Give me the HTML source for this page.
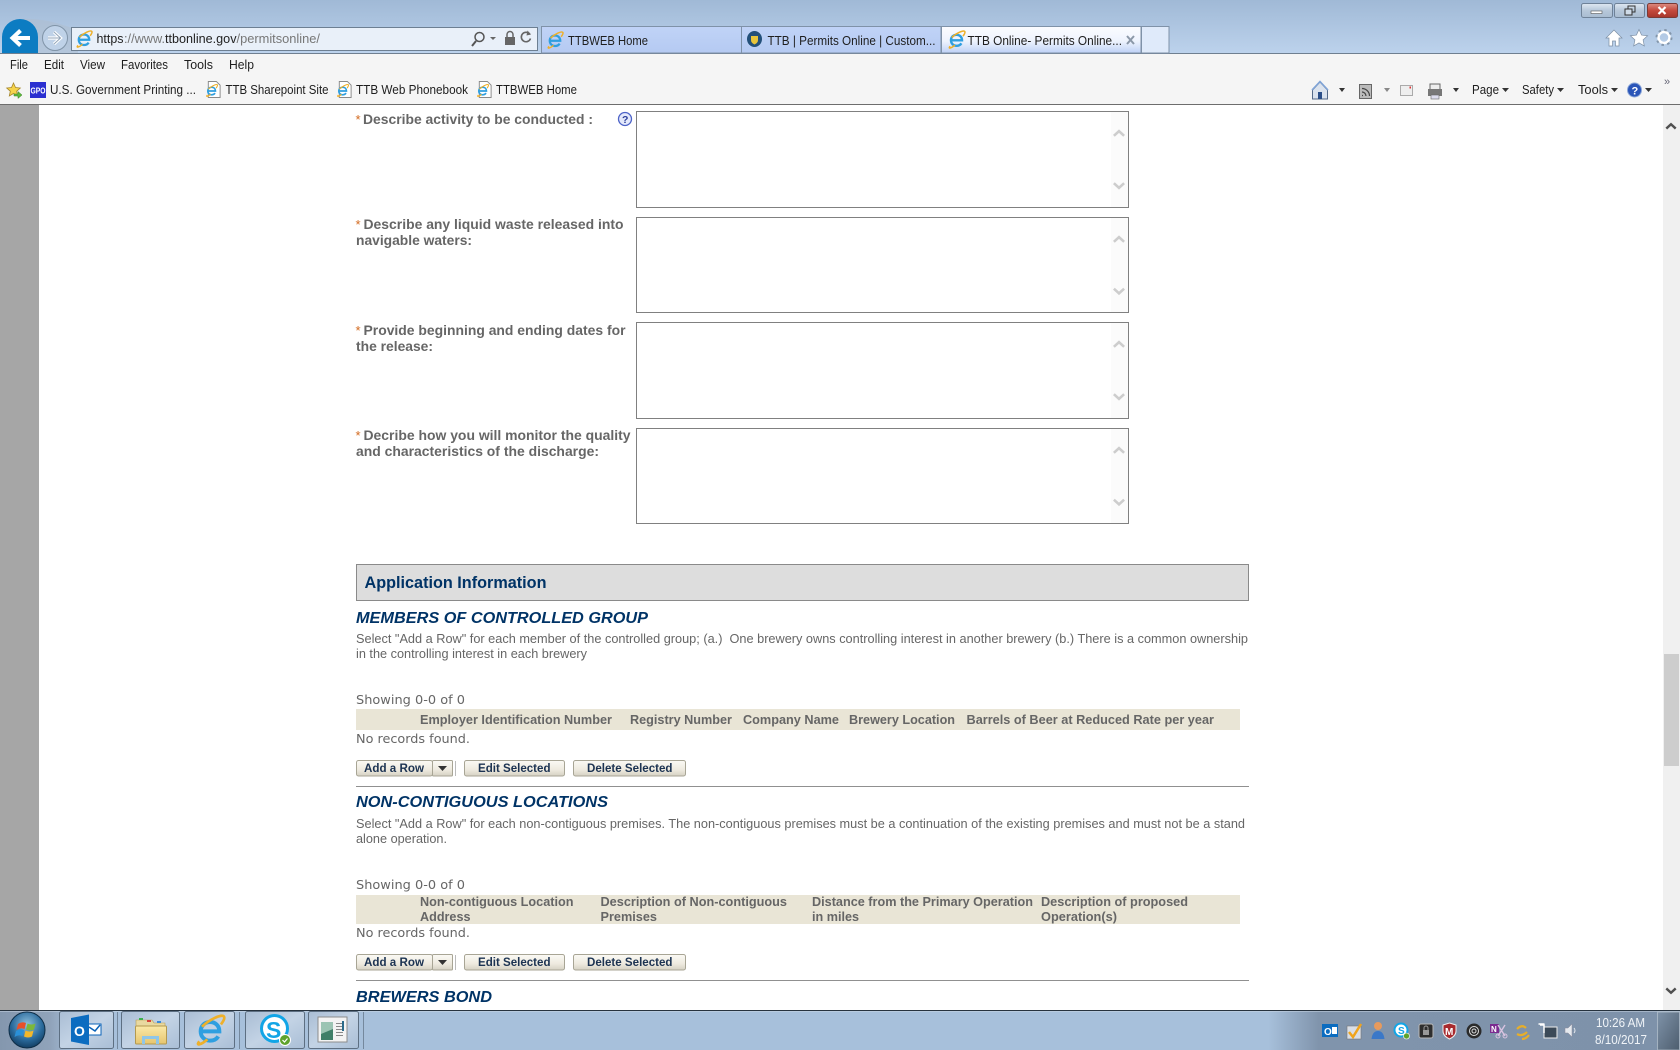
<!DOCTYPE html>
<html lang="en"><head><meta charset="utf-8"><title>TTB Online- Permits Online</title>
<style>
html,body{margin:0;padding:0;background:#fff;overflow:hidden;width:1680px;height:1050px}
svg{display:block}
text{white-space:pre}
.ui{font-family:"Liberation Sans",sans-serif;font-size:12.5px;fill:#1e1e1e}
.lab{font-family:"Liberation Sans",sans-serif;font-weight:bold;font-size:14px;fill:#666}
.st{font-family:"Liberation Sans",sans-serif;font-size:13px;fill:#d2691e}
.h{font-family:"Liberation Sans",sans-serif;font-weight:bold;font-style:italic;font-size:16px;fill:#003366}
.d{font-family:"Liberation Sans",sans-serif;font-size:12.5px;fill:#666}
.v{font-family:"DejaVu Sans",sans-serif;font-size:12.5px;fill:#666}
.th{font-family:"Liberation Sans",sans-serif;font-weight:bold;font-size:13.3px;fill:#666}
.b{font-family:"Liberation Sans",sans-serif;font-weight:bold;font-size:12px;fill:#1c3352}
.c{font-family:"Liberation Sans",sans-serif;font-size:12.5px;fill:#f0f4f8}
</style></head><body>
<svg xmlns="http://www.w3.org/2000/svg" width="1680" height="1050" viewBox="0 0 1680 1050">
<defs>
<linearGradient id="top" x1="0" y1="0" x2="0" y2="1"><stop offset="0" stop-color="#a0b9d6"/><stop offset="1" stop-color="#bcd2ec"/></linearGradient>
<linearGradient id="tab" x1="0" y1="0" x2="0" y2="1"><stop offset="0" stop-color="#c0d3f7"/><stop offset="1" stop-color="#b5caf2"/></linearGradient>
<linearGradient id="atab" x1="0" y1="0" x2="0" y2="1"><stop offset="0" stop-color="#fbfcff"/><stop offset=".55" stop-color="#eef3fd"/><stop offset="1" stop-color="#bed1f6"/></linearGradient>
<linearGradient id="btn" x1="0" y1="0" x2="0" y2="1"><stop offset="0" stop-color="#fbfaf5"/><stop offset=".6" stop-color="#eeeadf"/><stop offset="1" stop-color="#d5d1c3"/></linearGradient>
<linearGradient id="tb" x1="0" y1="0" x2="1" y2="0"><stop offset="0" stop-color="#8497ae"/><stop offset=".03" stop-color="#90a3ba"/><stop offset=".045" stop-color="#a7c0db"/><stop offset=".755" stop-color="#a7c0db"/><stop offset=".785" stop-color="#8094ac"/><stop offset="1" stop-color="#7e92aa"/></linearGradient>
<linearGradient id="tbb" x1="0" y1="0" x2="1" y2="1"><stop offset="0" stop-color="#a9bdd4"/><stop offset=".5" stop-color="#c3d3e5"/><stop offset="1" stop-color="#a9bed6"/></linearGradient>
<linearGradient id="win" x1="0" y1="0" x2="0" y2="1"><stop offset="0" stop-color="#dfe8f2"/><stop offset=".5" stop-color="#b7c8da"/><stop offset="1" stop-color="#a9bcd1"/></linearGradient>
<linearGradient id="cls" x1="0" y1="0" x2="0" y2="1"><stop offset="0" stop-color="#dc8d82"/><stop offset=".5" stop-color="#c4493c"/><stop offset="1" stop-color="#a6352b"/></linearGradient>
<radialGradient id="orb" cx=".5" cy=".35" r=".7"><stop offset="0" stop-color="#8ec0dd"/><stop offset=".6" stop-color="#2a6a9c"/><stop offset="1" stop-color="#0e3557"/></radialGradient>
<linearGradient id="desk" x1="0" y1="0" x2="1" y2="1"><stop offset="0" stop-color="#7f93a9"/><stop offset="1" stop-color="#4d5d6e"/></linearGradient>
<linearGradient id="fold" x1="0" y1="0" x2="0" y2="1"><stop offset="0" stop-color="#fbe9a8"/><stop offset="1" stop-color="#e6c56e"/></linearGradient>
<symbol id="ie" viewBox="0 0 24 24"><path d="M5.5 13H19c0-4.200-3-7-7-7s-7 3-7 7 3 7 7 7c2.700 0 4.800-1 6.200-3.200" fill="none" stroke="#2f9fe0" stroke-width="3"/><path d="M4 20.500C1 24 5 23.500 10 19M6 9.500C11 4.500 21 -.5 22.500 2c.8 1.500-.8 3.800-2.300 5.800" fill="none" stroke="#eeb02a" stroke-width="2"/></symbol>
<symbol id="doc" viewBox="0 0 18 18"><path d="M3.500 .5H12l4 4V17.500H3.500z" fill="#fff" stroke="#8a8a8a"/><use href="#ie" x="0" y="3" width="14" height="14"/></symbol>
<symbol id="chv" viewBox="0 0 14 8"><path d="M1.500 7L7 2l5.500 5" fill="none" stroke="currentColor" stroke-width="2.800"/></symbol>
</defs>

<!-- browser chrome -->
<rect width="1680" height="53" fill="url(#top)"/>
<rect y="53" width="1680" height="1" fill="#6f7f90"/>
<rect y="54" width="1680" height="50" fill="#f5f5f5"/>
<rect y="104" width="1680" height="1" fill="#6d6d6d"/>

<!-- window buttons -->
<rect x="1581.500" y="3.500" width="31" height="14" rx="2" fill="url(#win)" stroke="#6f8298"/>
<rect x="1591" y="11" width="11" height="2.500" fill="#fff" stroke="#555" stroke-width=".6"/>
<rect x="1614.500" y="3.500" width="30" height="14" rx="2" fill="url(#win)" stroke="#6f8298"/>
<rect x="1628" y="6" width="7" height="6" fill="none" stroke="#333"/><rect x="1625" y="9" width="7" height="6" fill="#cfdbe8" stroke="#333"/>
<rect x="1647.500" y="3.500" width="30" height="14" rx="2" fill="url(#cls)" stroke="#7a3a35"/>
<path d="M1658.500 7l7 7M1665.500 7l-7 7" stroke="#fff" stroke-width="2.200"/>

<!-- back/forward -->
<path d="M20 19C45 18 60 24 78 30V53H20z" fill="#aebdcd" opacity=".55"/>
<circle cx="55" cy="38" r="12.500" fill="#bfd2e8" stroke="#8094a8"/>
<path d="M48 38h12M54 32l6.500 6-6.500 6" fill="none" stroke="#fff" stroke-width="3.200"/>
<path d="M48 38h12M54 32l6.500 6-6.500 6" fill="none" stroke="#93a5b8" stroke-width="1"/>
<path d="M2 53V37a18 18 0 0 1 36 0v16z" fill="#0c7cc2"/>
<path d="M30 38H13M20.500 30.500L12.500 38l8 7.500" fill="none" stroke="#fff" stroke-width="4"/>

<!-- address bar -->
<rect x="71.500" y="27.500" width="466" height="23" fill="#e9f0f9" stroke="#6d7f92"/>
<use href="#ie" x="75" y="30" width="18" height="18"/>
<text class="ui" x="96.500" y="43" textLength="27" lengthAdjust="spacingAndGlyphs" style="fill:#222">https</text>
<text class="ui" x="124" y="43" textLength="41" lengthAdjust="spacingAndGlyphs" style="fill:#777">://www.</text>
<text class="ui" x="165" y="43" textLength="71.500" lengthAdjust="spacingAndGlyphs" style="fill:#222">ttbonline.gov</text>
<text class="ui" x="236.500" y="43" textLength="83.500" lengthAdjust="spacingAndGlyphs" style="fill:#777">/permitsonline/</text>
<circle cx="479.500" cy="37" r="4.500" fill="none" stroke="#555" stroke-width="1.500"/><path d="M476 41l-4 5" stroke="#555" stroke-width="2"/>
<path d="M490 37h6l-3 3z" fill="#666"/>
<rect x="505" y="37" width="10" height="8" fill="#666"/><path d="M507 37v-2.500a3 3 0 0 1 6 0V37" fill="none" stroke="#666" stroke-width="1.500"/>
<path d="M530 34.500a4.700 4.700 0 1 0 .5 4" fill="none" stroke="#666" stroke-width="1.600"/><path d="M527.500 30.500l3.500 4-4.500 1z" fill="#666"/>

<!-- tabs -->
<rect x="541.500" y="26.500" width="200" height="26.500" fill="url(#tab)" stroke="#7f92a8"/>
<rect x="741.500" y="26.500" width="199.500" height="26.500" fill="url(#tab)" stroke="#7f92a8"/>
<rect x="941.500" y="26.500" width="199.500" height="26.500" fill="url(#atab)" stroke="#7f92a8"/>
<rect x="1141.500" y="26.500" width="27.500" height="26.500" fill="#dfeafa" stroke="#7f92a8"/>
<use href="#ie" x="546" y="31" width="18" height="18"/>
<text class="ui" x="568" y="45" textLength="80" lengthAdjust="spacingAndGlyphs">TTBWEB Home</text>
<ellipse cx="754.500" cy="39" rx="7.500" ry="8" fill="#23507a"/><path d="M751 36h7v4q0 3-3.500 4.500Q751 43 751 40z" fill="#e8c53a"/>
<text class="ui" x="767.500" y="45" textLength="168" lengthAdjust="spacingAndGlyphs">TTB | Permits Online | Custom...</text>
<use href="#ie" x="947" y="30" width="19" height="19"/>
<text class="ui" x="967.500" y="45" textLength="154.500" lengthAdjust="spacingAndGlyphs">TTB Online- Permits Online...</text>
<path d="M1127 36l7 8M1134 36l-7 8" stroke="#8b98a8" stroke-width="2"/>

<!-- right icons -->
<path d="M1614 30l-8 8h3v8h3.500v-5h3v5h3.500v-8h3z" fill="#fff" stroke="#7c8fa4" stroke-width=".7"/>
<path d="M1639 29.500l2.600 5.600 6 .7-4.500 4.100 1.200 6-5.300-3-5.300 3 1.200-6-4.500-4.100 6-.7z" fill="#fff" stroke="#7c8fa4" stroke-width=".7"/>
<circle cx="1664" cy="37.500" r="5.500" fill="none" stroke="#fff" stroke-width="2.500"/><circle cx="1664" cy="37.500" r="7.500" fill="none" stroke="#8396ab" stroke-width="2" stroke-dasharray="2.500 3.400"/>

<!-- menu -->
<text class="ui" x="10" y="69" textLength="18" lengthAdjust="spacingAndGlyphs">File</text>
<text class="ui" x="44" y="69" textLength="20" lengthAdjust="spacingAndGlyphs">Edit</text>
<text class="ui" x="80" y="69" textLength="25" lengthAdjust="spacingAndGlyphs">View</text>
<text class="ui" x="121" y="69" textLength="47" lengthAdjust="spacingAndGlyphs">Favorites</text>
<text class="ui" x="184" y="69" textLength="29" lengthAdjust="spacingAndGlyphs">Tools</text>
<text class="ui" x="229" y="69" textLength="25" lengthAdjust="spacingAndGlyphs">Help</text>

<!-- favourites -->
<path d="M13.500 83l2 4.500 4.800.5-3.600 3.200 1 4.800-4.200-2.500-4.200 2.500 1-4.800L6.700 88l4.800-.5z" fill="#f5d34c" stroke="#a5862a" stroke-width=".8"/>
<path d="M14 94h4v-2.500l4 3.500-4 3.500V96h-4z" fill="#5cb83c" stroke="#3d8426" stroke-width=".5"/>
<rect x="30" y="82" width="16" height="16" fill="#2a2fd0"/>
<text x="30.500" y="93.500" textLength="15" lengthAdjust="spacingAndGlyphs" style="font:bold 8.500px 'Liberation Sans',sans-serif;fill:#fff">GPO</text>
<text class="ui" x="50" y="94" textLength="146" lengthAdjust="spacingAndGlyphs">U.S. Government Printing ...</text>
<use href="#doc" x="205" y="81" width="17" height="17"/>
<text class="ui" x="225.500" y="94" textLength="103" lengthAdjust="spacingAndGlyphs">TTB Sharepoint Site</text>
<use href="#doc" x="336" y="81" width="17" height="17"/>
<text class="ui" x="356" y="94" textLength="112" lengthAdjust="spacingAndGlyphs">TTB Web Phonebook</text>
<use href="#doc" x="476" y="81" width="17" height="17"/>
<text class="ui" x="496" y="94" textLength="81" lengthAdjust="spacingAndGlyphs">TTBWEB Home</text>

<!-- command bar -->
<path d="M1320 82l-7.500 8v9h15v-9z" fill="#dbe3ee" stroke="#556a88"/><path d="M1312 90l8-8.500 8 8.500" fill="none" stroke="#7fa4d8" stroke-width="1.500"/><rect x="1318" y="92" width="4" height="7" fill="#2c4f88"/>
<path d="M1339 88h6l-3 4z" fill="#333"/>
<rect x="1359.500" y="84.500" width="12" height="14" fill="#bbb" stroke="#666"/><path d="M1362 95.500h1M1362 92a4 4 0 0 1 4 4M1362 88.500a7.500 7.500 0 0 1 7.500 7.500" fill="none" stroke="#444" stroke-width="1.200"/>
<path d="M1384 88h6l-3 4z" fill="#888"/>
<rect x="1400.500" y="85.500" width="12" height="10" fill="#eee" stroke="#aaa"/><path d="M1409.500 87.500h1.500" stroke="#d33" stroke-width="2"/>
<rect x="1430" y="84" width="10" height="6" fill="#eee" stroke="#666"/><rect x="1428" y="89" width="14" height="7" fill="#777"/><rect x="1431" y="95" width="8" height="4" fill="#dde" stroke="#666" stroke-width=".6"/>
<path d="M1453 88h6l-3 4z" fill="#333"/>
<text class="ui" x="1472" y="94" textLength="27" lengthAdjust="spacingAndGlyphs">Page</text><path d="M1502 88h7l-3.500 4z" fill="#333"/>
<text class="ui" x="1522" y="94" textLength="32" lengthAdjust="spacingAndGlyphs">Safety</text><path d="M1557 88h7l-3.500 4z" fill="#333"/>
<text class="ui" x="1578" y="94" textLength="30" lengthAdjust="spacingAndGlyphs">Tools</text><path d="M1611 88h7l-3.500 4z" fill="#333"/>
<circle cx="1634.500" cy="90" r="7" fill="#2a55b8" stroke="#8ba6d8"/>
<text x="1631.500" y="94.500" style="font:bold 11px 'Liberation Sans',sans-serif;fill:#fff">?</text>
<path d="M1645 88h7l-3.500 4z" fill="#333"/>
<text x="1664" y="85" style="font:11px 'Liberation Sans',sans-serif;fill:#667">»</text>

<!-- page sides -->
<rect y="105" width="39" height="905" fill="#a6a6a6"/>
<rect x="1663" y="105" width="17" height="905" fill="#f0f0f0"/>
<rect x="1664" y="654" width="15" height="112" fill="#cdcdcd"/>
<use href="#chv" x="1665" y="122" width="12" height="8" color="#505050"/>
<g transform="translate(0 1986) scale(1 -1)"><use href="#chv" x="1665" y="991" width="12" height="8" color="#505050"/></g>

<!-- form labels -->
<text class="st" x="355.500" y="124">*</text>
<text class="lab" x="363" y="124" textLength="230" lengthAdjust="spacingAndGlyphs">Describe activity to be conducted :</text>
<circle cx="625" cy="119" r="6.500" fill="#e4e9fb" stroke="#4d63c8" stroke-width="1.300"/>
<text x="622" y="123" style="font:bold 10.500px 'Liberation Sans',sans-serif;fill:#2c3f9c">?</text>

<text class="st" x="355.500" y="229">*</text>
<text class="lab" x="363.500" y="229" textLength="260" lengthAdjust="spacingAndGlyphs">Describe any liquid waste released into</text>
<text class="lab" x="356" y="245" textLength="116" lengthAdjust="spacingAndGlyphs">navigable waters:</text>

<text class="st" x="355.500" y="335">*</text>
<text class="lab" x="363.500" y="335" textLength="262" lengthAdjust="spacingAndGlyphs">Provide beginning and ending dates for</text>
<text class="lab" x="356" y="351" textLength="77" lengthAdjust="spacingAndGlyphs">the release:</text>

<text class="st" x="355.500" y="440">*</text>
<text class="lab" x="363.500" y="440" textLength="267" lengthAdjust="spacingAndGlyphs">Decribe how you will monitor the quality</text>
<text class="lab" x="356" y="456" textLength="243" lengthAdjust="spacingAndGlyphs">and characteristics of the discharge:</text>

<!-- textareas -->
<g fill="#fff" stroke="#808080">
<rect x="636.500" y="111.500" width="492" height="96"/>
<rect x="636.500" y="217.500" width="492" height="95"/>
<rect x="636.500" y="322.500" width="492" height="96"/>
<rect x="636.500" y="428.500" width="492" height="95"/>
</g>
<g fill="#fbfbfb">
<rect x="1111" y="112" width="17" height="95"/>
<rect x="1111" y="218" width="17" height="94"/>
<rect x="1111" y="323" width="17" height="95"/>
<rect x="1111" y="429" width="17" height="94"/>
</g>
<g color="#cdcdcd">
<use href="#chv" x="1112.500" y="129" width="13" height="8"/>
<g transform="translate(0 371) scale(1 -1)"><use href="#chv" x="1112.500" y="181" width="13" height="8"/></g>
<use href="#chv" x="1112.500" y="235" width="13" height="8"/>
<g transform="translate(0 582) scale(1 -1)"><use href="#chv" x="1112.500" y="286.500" width="13" height="8"/></g>
<use href="#chv" x="1112.500" y="340" width="13" height="8"/>
<g transform="translate(0 793) scale(1 -1)"><use href="#chv" x="1112.500" y="392" width="13" height="8"/></g>
<use href="#chv" x="1112.500" y="446" width="13" height="8"/>
<g transform="translate(0 1004) scale(1 -1)"><use href="#chv" x="1112.500" y="497.500" width="13" height="8"/></g>
</g>

<!-- application info -->
<rect x="356.500" y="564.500" width="892" height="36" fill="#dddddd" stroke="#8a8a8a"/>
<text x="364.500" y="588" textLength="182" lengthAdjust="spacingAndGlyphs" style="font:bold 16.500px 'Liberation Sans',sans-serif;fill:#003366">Application Information</text>

<text class="h" x="356" y="623" textLength="292" lengthAdjust="spacingAndGlyphs">MEMBERS OF CONTROLLED GROUP</text>
<text class="d" x="356" y="643" textLength="892" lengthAdjust="spacingAndGlyphs">Select "Add a Row" for each member of the controlled group; (a.)  One brewery owns controlling interest in another brewery (b.) There is a common ownership</text>
<text class="d" x="356" y="658" textLength="231" lengthAdjust="spacingAndGlyphs">in the controlling interest in each brewery</text>
<text class="v" x="356" y="704" textLength="109" lengthAdjust="spacingAndGlyphs">Showing 0-0 of 0</text>
<rect x="356" y="709" width="884" height="21" fill="#e9e5d6"/>
<text class="th" x="420" y="724" textLength="192" lengthAdjust="spacingAndGlyphs">Employer Identification Number</text>
<text class="th" x="630" y="724" textLength="102" lengthAdjust="spacingAndGlyphs">Registry Number</text>
<text class="th" x="743" y="724" textLength="96" lengthAdjust="spacingAndGlyphs">Company Name</text>
<text class="th" x="849" y="724" textLength="106" lengthAdjust="spacingAndGlyphs">Brewery Location</text>
<text class="th" x="966.500" y="724" textLength="247.500" lengthAdjust="spacingAndGlyphs">Barrels of Beer at Reduced Rate per year</text>
<text class="v" x="356" y="743" textLength="114" lengthAdjust="spacingAndGlyphs">No records found.</text>

<g>
<rect x="356.500" y="760.500" width="76" height="15.500" rx="2" fill="url(#btn)" stroke="#a8a595"/>
<rect x="432.500" y="760.500" width="20" height="15.500" rx="1" fill="url(#btn)" stroke="#a8a595"/>
<rect x="455" y="761" width="1" height="15" fill="#bbb"/>
<path d="M438 766h9l-4.500 5z" fill="#333"/>
<rect x="464.500" y="760.500" width="100" height="15.500" rx="2" fill="url(#btn)" stroke="#a8a595"/>
<rect x="573.500" y="760.500" width="112" height="15.500" rx="2" fill="url(#btn)" stroke="#a8a595"/>
<text class="b" x="364" y="772" textLength="60" lengthAdjust="spacingAndGlyphs">Add a Row</text>
<text class="b" x="478" y="772" textLength="72.500" lengthAdjust="spacingAndGlyphs">Edit Selected</text>
<text class="b" x="587" y="772" textLength="85.500" lengthAdjust="spacingAndGlyphs">Delete Selected</text>
</g>
<rect x="356" y="786" width="893" height="1" fill="#909090"/>

<text class="h" x="356" y="807" textLength="252" lengthAdjust="spacingAndGlyphs">NON-CONTIGUOUS LOCATIONS</text>
<text class="d" x="356" y="828" textLength="889" lengthAdjust="spacingAndGlyphs">Select "Add a Row" for each non-contiguous premises. The non-contiguous premises must be a continuation of the existing premises and must not be a stand</text>
<text class="d" x="356" y="843" textLength="91" lengthAdjust="spacingAndGlyphs">alone operation.</text>
<text class="v" x="356" y="889" textLength="109" lengthAdjust="spacingAndGlyphs">Showing 0-0 of 0</text>
<rect x="356" y="895" width="884" height="29" fill="#e9e5d6"/>
<text class="th" x="420" y="906" textLength="153.500" lengthAdjust="spacingAndGlyphs">Non-contiguous Location</text>
<text class="th" x="420" y="921" textLength="50.500" lengthAdjust="spacingAndGlyphs">Address</text>
<text class="th" x="600.500" y="906" textLength="186.500" lengthAdjust="spacingAndGlyphs">Description of Non-contiguous</text>
<text class="th" x="600.500" y="921" textLength="56.500" lengthAdjust="spacingAndGlyphs">Premises</text>
<text class="th" x="812" y="906" textLength="221" lengthAdjust="spacingAndGlyphs">Distance from the Primary Operation</text>
<text class="th" x="812" y="921" textLength="47" lengthAdjust="spacingAndGlyphs">in miles</text>
<text class="th" x="1041" y="906" textLength="147" lengthAdjust="spacingAndGlyphs">Description of proposed</text>
<text class="th" x="1041" y="921" textLength="76" lengthAdjust="spacingAndGlyphs">Operation(s)</text>
<text class="v" x="356" y="937" textLength="114" lengthAdjust="spacingAndGlyphs">No records found.</text>

<g>
<rect x="356.500" y="954.500" width="76" height="15.500" rx="2" fill="url(#btn)" stroke="#a8a595"/>
<rect x="432.500" y="954.500" width="20" height="15.500" rx="1" fill="url(#btn)" stroke="#a8a595"/>
<rect x="455" y="955" width="1" height="15" fill="#bbb"/>
<path d="M438 960h9l-4.500 5z" fill="#333"/>
<rect x="464.500" y="954.500" width="100" height="15.500" rx="2" fill="url(#btn)" stroke="#a8a595"/>
<rect x="573.500" y="954.500" width="112" height="15.500" rx="2" fill="url(#btn)" stroke="#a8a595"/>
<text class="b" x="364" y="966" textLength="60" lengthAdjust="spacingAndGlyphs">Add a Row</text>
<text class="b" x="478" y="966" textLength="72.500" lengthAdjust="spacingAndGlyphs">Edit Selected</text>
<text class="b" x="587" y="966" textLength="85.500" lengthAdjust="spacingAndGlyphs">Delete Selected</text>
</g>
<rect x="356" y="980" width="893" height="1" fill="#909090"/>
<text class="h" x="356" y="1002" textLength="136" lengthAdjust="spacingAndGlyphs">BREWERS BOND</text>

<!-- taskbar -->
<rect y="1010" width="1680" height="40" fill="url(#tb)"/>
<rect y="1010" width="1680" height="1" fill="#26323e"/>
<rect y="1011" width="1680" height="1" fill="#c9d6e4" opacity=".5"/>
<circle cx="27" cy="1030" r="18" fill="url(#orb)" stroke="#0e2d46"/>
<path d="M18 1024q4-3 8-1l-1.500 6q-4-2-8 1z" fill="#e8502a"/><path d="M27.500 1023.500q4 2 8 0l-1.500 6q-4 2-8 0z" fill="#7cb83a"/><path d="M16 1031q4-3 8-1l-1.500 6q-4-2-8 1z" fill="#2a90d8"/><path d="M25.500 1030.500q4 2 8 0l-1.500 6q-4 2-8 0z" fill="#f4b82a"/>

<g fill="url(#tbb)" stroke="#5d6f82">
<rect x="59.500" y="1011.500" width="54" height="37" rx="2"/><rect x="121.500" y="1011.500" width="58" height="37" rx="2"/>
<rect x="184.500" y="1011.500" width="50" height="37" rx="2"/><rect x="245.500" y="1011.500" width="59" height="37" rx="2"/>
<rect x="308.500" y="1011.500" width="50" height="37" rx="2"/>
</g>
<g stroke="#6f8297" opacity=".9"><path d="M117.500 1012v37M239.500 1012v37M363.500 1012v37"/></g>
<rect x="88" y="1024" width="13" height="11" fill="#fff" stroke="#0b63b8"/><path d="M89 1027l6 4 5-6" fill="none" stroke="#0b63b8" stroke-width="1.500"/>
<path d="M71 1018l18-3.500V1045l-18-3.500z" fill="#0b6cc0"/>
<text x="74" y="1036" style="font:bold 14px 'Liberation Sans',sans-serif;fill:#fff">O</text>
<path d="M136 1020h16l2 3h11v4h-29z" fill="#e9d9a0" stroke="#b79d55" stroke-width=".6"/>
<rect x="139" y="1018" width="4" height="2" fill="#3cb04c"/><rect x="147" y="1020" width="4" height="2" fill="#d8433a"/><rect x="157" y="1021" width="4" height="2" fill="#3a8ad8"/>
<rect x="135.500" y="1026" width="31" height="18" rx="1" fill="url(#fold)" stroke="#b3994f"/>
<path d="M142 1044v-8h17v8h-3v-5h-11v5z" fill="#8fc6e8"/>
<use href="#ie" x="194" y="1014" width="32" height="32"/>
<circle cx="274.500" cy="1028.500" r="13" fill="#fff" stroke="#12a5e6" stroke-width="3"/>
<text x="266" y="1038" style="font:bold 23px 'Liberation Sans',sans-serif;fill:#12a5e6">S</text>
<circle cx="285" cy="1040" r="5.500" fill="#5fa32d" stroke="#fff"/><path d="M282.500 1040l2 2 3-3.500" fill="none" stroke="#fff" stroke-width="1.200"/>
<rect x="318" y="1017" width="29" height="25" fill="#f3f3f3" stroke="#8c8c8c"/>
<rect x="321" y="1022" width="12" height="18" fill="#3f7f68"/><path d="M321 1022h12v7l-12 5z" fill="#9bc4b3"/>
<g fill="#888"><rect x="336" y="1023" width="7" height="1"/><rect x="336" y="1026" width="7" height="1"/><rect x="336" y="1029" width="7" height="1"/><rect x="336" y="1032" width="7" height="1"/><rect x="336" y="1035" width="7" height="1"/></g><rect x="342" y="1021" width="2" height="10" fill="#2a6a8a"/>

<!-- tray -->
<rect x="1322" y="1024" width="16" height="13" fill="#0b6cc0"/><text x="1324" y="1035" style="font:bold 10px 'Liberation Sans',sans-serif;fill:#fff">O</text><rect x="1332" y="1027" width="5" height="7" fill="#fff"/>
<rect x="1347" y="1026" width="14" height="13" fill="#d9dee6" stroke="#777" stroke-width=".6"/><path d="M1349 1032l4 5 8-13" fill="none" stroke="#f0a41c" stroke-width="2.500"/>
<circle cx="1378" cy="1026" r="4" fill="#e89a5c"/><path d="M1371.500 1039q1-8 6.500-8t6.500 8z" fill="#3a78c8"/>
<circle cx="1401" cy="1030" r="6.500" fill="#fff" stroke="#12a5e6" stroke-width="2"/><text x="1398" y="1034" style="font:bold 10px 'Liberation Sans',sans-serif;fill:#12a5e6">S</text><circle cx="1406.500" cy="1036" r="3" fill="#5fa32d" stroke="#fff" stroke-width=".6"/>
<rect x="1419" y="1024" width="14" height="14" rx="2" fill="#2e2e2e" stroke="#b8b8b8"/><rect x="1423" y="1030" width="6" height="5" fill="#999"/><path d="M1424 1030v-2a2 2 0 0 1 4 0v2" fill="none" stroke="#999"/>
<path d="M1443 1025l6.500-2 6.500 2v6q0 5-6.500 8-6.500-3-6.500-8z" fill="#a82a2e" stroke="#eee"/><text x="1445" y="1035" style="font:bold 10px 'Liberation Sans',sans-serif;fill:#fff">M</text>
<circle cx="1474" cy="1031" r="7.500" fill="#2a2a2a"/><circle cx="1474" cy="1031" r="4.500" fill="none" stroke="#ddd"/><circle cx="1474" cy="1031" r="2" fill="none" stroke="#ddd"/>
<rect x="1490" y="1024" width="9" height="9" fill="#7b2b90"/><text x="1491" y="1032" style="font:bold 8px 'Liberation Sans',sans-serif;fill:#fff">N</text><path d="M1498 1025l7 11M1505 1025l-7 11" stroke="#d9c3e0" stroke-width="1.400"/><circle cx="1498" cy="1036" r="2" fill="none" stroke="#d9c3e0"/><circle cx="1505" cy="1036" r="2" fill="none" stroke="#d9c3e0"/>
<path d="M1517 1029q5-5 9-1M1517 1034q5 3 10-2M1522 1039q4 0 7-4" fill="none" stroke="#e7ae2a" stroke-width="2.200"/>
<rect x="1544" y="1027" width="13" height="11" fill="#3c4a58" stroke="#eee"/><path d="M1540 1025h4v8M1538.500 1024h6" fill="none" stroke="#fff" stroke-width="1.500"/>
<path d="M1565 1028h3l4-4v13l-4-4h-3z" fill="#e5e9ee" stroke="#889" stroke-width=".5"/><path d="M1574 1028q2 2.500 0 5" fill="none" stroke="#e5e9ee"/>
<text class="c" x="1596" y="1027" textLength="49" lengthAdjust="spacingAndGlyphs">10:26 AM</text>
<text class="c" x="1595" y="1044" textLength="52" lengthAdjust="spacingAndGlyphs">8/10/2017</text>
<rect x="1657.500" y="1012" width="22" height="38" fill="url(#desk)" stroke="#c3ced9" stroke-opacity=".6"/>
</svg>
</body></html>
